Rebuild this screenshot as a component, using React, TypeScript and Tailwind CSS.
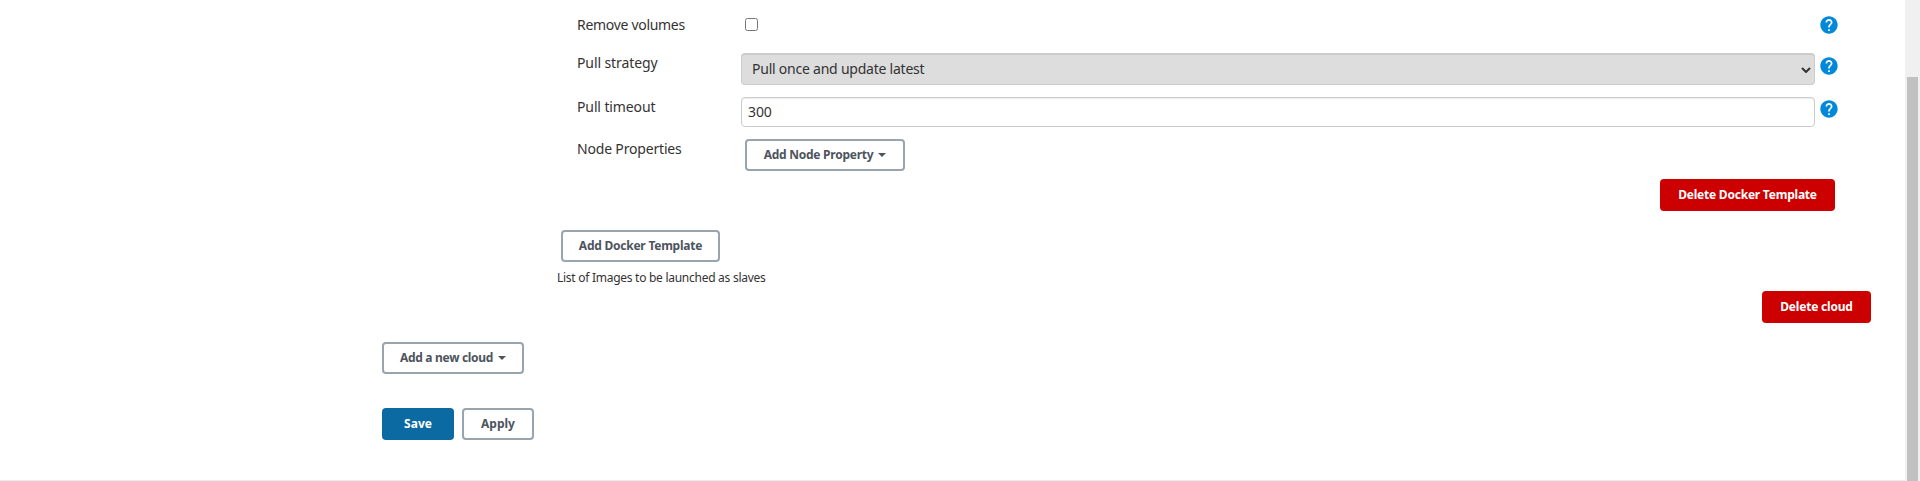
import type { ReactNode } from 'react';

function HelpIcon() {
  return (
    <button aria-label="Help" className="block size-[18px] shrink-0">
      <svg viewBox="1.6 1.6 20.8 20.8" className="size-[18px]" fill="#0288d9">
        <path d="M12 2C6.48 2 2 6.48 2 12s4.48 10 10 10 10-4.48 10-10S17.52 2 12 2zm1 17h-2v-2h2v2zm2.07-7.75l-.9.92C13.45 12.9 13 13.5 13 15h-2v-.5c0-1.1.45-2.1 1.17-2.83l1.24-1.26c.37-.36.59-.86.59-1.41 0-1.1-.9-2-2-2s-2 .9-2 2H8c0-2.21 1.79-4 4-4s4 1.79 4 4c0 .88-.36 1.68-.93 2.25z" />
      </svg>
    </button>
  );
}

function Caret() {
  return (
    <svg viewBox="0 0 8 4" className="ml-[5px] h-1 w-2" fill="#4d545d">
      <path d="M0 0h8L4 4z" />
    </svg>
  );
}

const base = 'flex h-8 items-center justify-center rounded-[4px] text-[12px] font-bold whitespace-nowrap';

function OutlineButton({ className, children }: { className: string; children: ReactNode }) {
  return (
    <button className={`${base} border-2 border-[#98a4ae] bg-white text-[#4d545d] ${className}`}>{children}</button>
  );
}

function SolidButton({ className, children }: { className: string; children: ReactNode }) {
  return <button className={`${base} text-white ${className}`}>{children}</button>;
}

function Row({ label, className, labelClass, children }: { label: string; className: string; labelClass: string; children: ReactNode }) {
  return (
    <div className={`flex items-start ${className}`}>
      <div className="w-[164px] shrink-0 text-[14px] leading-5">
        <span className={labelClass}>{label}</span>
      </div>
      {children}
    </div>
  );
}

export default function App() {
  return (
    <div className="flex h-[481px] w-full overflow-hidden bg-white font-['Noto_Sans',sans-serif] text-[#333]">
      <main className="flex flex-1 flex-col border-b border-[#e8eeee] pl-[382px]">
        <section className="flex flex-col pt-[15px] pl-[195px]">
          <Row label="Remove volumes" className="h-[38px]" labelClass="tracking-[-0.3px]">
            <input type="checkbox" className="mt-[3px] ml-1 size-[13px]" />
            <div className="mt-px mr-[67px] ml-auto">
              <HelpIcon />
            </div>
          </Row>
          <Row label="Pull strategy" className="h-11" labelClass="tracking-[-0.1px]">
            <div className="flex h-8 w-[1074px] items-center justify-between rounded-[4px] border border-t-2 border-[#ccc] bg-[#ddd] pr-[3px] pl-[10px] text-[14px]">
              <span className="pb-0.5 tracking-[-0.23px]">Pull once and update latest</span>
              <svg viewBox="0 0 10 6" className="h-1.5 w-[10px]" fill="none" stroke="#333" strokeWidth="2">
                <path d="M1 1l4 4 4-4" />
              </svg>
            </div>
            <div className="mt-1 ml-[5px]">
              <HelpIcon />
            </div>
          </Row>
          <Row label="Pull timeout" className="h-[42px]" labelClass="tracking-[-0.12px]">
            <input
              defaultValue="300"
              className="h-[30px] w-[1074px] rounded-[4px] border border-[#ccc] bg-white px-1.5 pb-0.5 text-[14px] tracking-[-0.1px] shadow-[inset_0_1px_1px_rgba(0,0,0,0.075)]"
            />
            <div className="mt-[3px] ml-[5px]">
              <HelpIcon />
            </div>
          </Row>
          <Row label="Node Properties" className="h-10" labelClass="tracking-[-0.18px]">
            <OutlineButton className="ml-1 w-40">
              <span className="tracking-[-0.25px]">Add Node Property</span>
              <Caret />
            </OutlineButton>
          </Row>
          <SolidButton className="mr-[70px] w-[175px] self-end bg-[#c00]">
            <span className="tracking-[-0.22px]">Delete Docker Template</span>
          </SolidButton>
        </section>
        <section className="flex flex-col pt-[19px] pl-[175px]">
          <OutlineButton className="ml-1 w-[159px]">
            <span className="tracking-[-0.24px]">Add Docker Template</span>
          </OutlineButton>
          <p className="mt-1.5 h-[23px] text-[12px] leading-5">
            <span className="tracking-[-0.27px]">List of Images to be launched as slaves</span>
          </p>
          <SolidButton className="mr-[34px] w-[109px] self-end bg-[#c00]">
            <span className="tracking-[-0.2px]">Delete cloud</span>
          </SolidButton>
        </section>
        <OutlineButton className="mt-[19px] w-[142px]">
          <span className="tracking-[-0.3px]">Add a new cloud</span>
          <Caret />
        </OutlineButton>
        <div className="mt-[34px] flex gap-2">
          <SolidButton className="w-[72px] bg-[#0b6aa2]">
            <span>Save</span>
          </SolidButton>
          <OutlineButton className="w-[72px]">
            <span>Apply</span>
          </OutlineButton>
        </div>
      </main>
      <aside className="w-[15px] shrink-0 bg-[#f0f0f0] pt-[77px] pl-0.5">
        <div className="h-full w-[11px] bg-[#c1c1c1]" />
      </aside>
    </div>
  );
}
